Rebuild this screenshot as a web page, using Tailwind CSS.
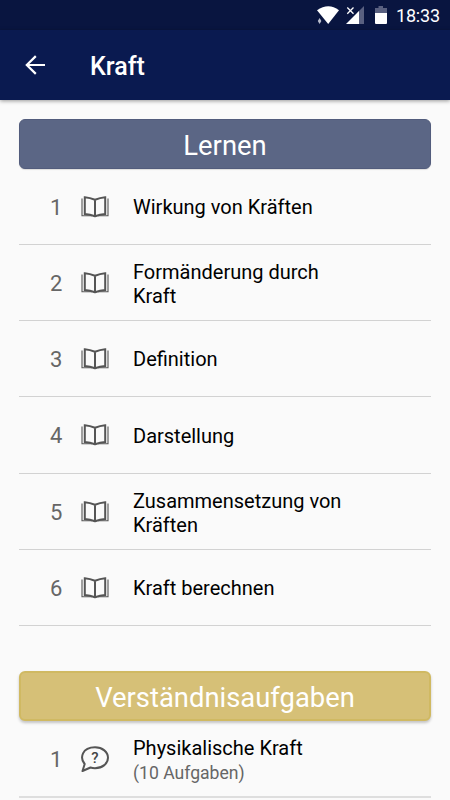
<!DOCTYPE html>
<html lang="de">
<head>
<meta charset="utf-8">
<title>Kraft</title>
<script src="https://cdn.jsdelivr.net/npm/@tailwindcss/browser@4"></script>
</head>
<body class="bg-[#fafafa] font-['Roboto',sans-serif] w-[450px] h-[800px] overflow-hidden text-black">
<svg class="hidden">
  <symbol id="book" viewBox="0 0 28 22">
    <path fill="none" stroke="#555" stroke-width="2" d="M14 3.800 Q9 1.800 3.800 1.300 V18 Q9 18.200 14 20.200 Q19 18.200 24.200 18 V1.300 Q19 1.800 14 3.800 Z M14 3.800 V20.200"/>
    <path fill="none" stroke="#555" stroke-width="1.100" d="M1 2.500 V19.800 H11 M27 2.500 V19.800 H17"/>
  </symbol>
</svg>
<div class="flex h-full flex-col">
  <div class="flex h-[30px] shrink-0 items-center justify-end bg-[#091540] pr-[10px] text-white">
    <svg class="h-[30px] w-[76px]" viewBox="0 0 76 30">
      <path fill="#fff" d="M4 10.200 Q15.500 2.300 26 10.200 L15.200 24 Z"/>
      <path fill="#b9bdcc" d="M6.600 18 L8.400 21 L6.600 24 L4.800 21 Z"/>
      <path fill="#596080" d="M51 6 V24 H44 V13 Z"/>
      <path fill="#fff" d="M46 11 V24 H33 Z"/>
      <path stroke="#fff" stroke-width="1.300" d="M34.300 7.500 L40.500 13.700 M40.500 7.500 L34.300 13.700"/>
      <path fill="#596080" d="M62 8 H65.500 V6 H70 V8 H74 V14 H62 Z"/>
      <path fill="#fff" d="M62 13 H74 V23 Q74 24 73 24 H63 Q62 24 62 23 Z"/>
    </svg>
    <span class="ml-[7px] w-[44px] whitespace-nowrap pt-px text-[18px] leading-none tracking-[-0.2px]">18:33</span>
  </div>
  <div class="z-10 flex h-[70px] shrink-0 items-center bg-[#0a1a50] text-white shadow-[0_1px_4px_rgba(0,0,0,0.4)]">
    <svg class="ml-[25px] h-5 w-5" viewBox="0 0 20 20" fill="none" stroke="#fff" stroke-width="2.200"><path d="M20 10 H2 M10.800 1.100 L1.800 10 L10.800 18.900"/></svg>
    <h1 class="ml-[45px] pt-[3px] text-[25px] font-medium leading-none">Kraft</h1>
  </div>
  <main class="flex flex-col px-[19px] pt-[19px]">
    <h2 class="flex h-[50px] shrink-0 items-center justify-center rounded-[6px] border border-[#525c7c] bg-[#5b6685] pt-[5px] text-[27.400px] text-white shadow-[0_1px_1px_rgba(0,0,0,0.12)]">Lernen</h2>
    <ol class="leading-6 text-[20px]">
      <li class="flex h-[76px] items-center border-b border-[#d2d2d2]"><span class="w-[62px] pl-[31px] pt-[2px] text-[22px] text-[#666]">1</span><svg class="mr-[24px] h-[22px] w-[28px]"><use href="#book"/></svg><span class="w-[220px] pt-px">Wirkung von Kräften</span></li>
      <li class="flex h-[76px] items-center border-b border-[#d2d2d2]"><span class="w-[62px] pl-[31px] pt-[2px] text-[22px] text-[#666]">2</span><svg class="mr-[24px] h-[22px] w-[28px]"><use href="#book"/></svg><span class="w-[220px] pt-[2px]">Formänderung durch<br>Kraft</span></li>
      <li class="flex h-[76px] items-center border-b border-[#d2d2d2]"><span class="w-[62px] pl-[31px] pt-[2px] text-[22px] text-[#666]">3</span><svg class="mr-[24px] h-[22px] w-[28px]"><use href="#book"/></svg><span class="w-[220px] pt-px">Definition</span></li>
      <li class="flex h-[77px] items-center border-b border-[#d2d2d2]"><span class="w-[62px] pl-[31px] pt-[2px] text-[22px] text-[#666]">4</span><svg class="mr-[24px] h-[22px] w-[28px]"><use href="#book"/></svg><span class="w-[220px] pt-[2px]">Darstellung</span></li>
      <li class="flex h-[76px] items-center border-b border-[#d2d2d2]"><span class="w-[62px] pl-[31px] pt-[2px] text-[22px] text-[#666]">5</span><svg class="mr-[24px] h-[22px] w-[28px]"><use href="#book"/></svg><span class="w-[220px] pt-[2px]">Zusammensetzung von<br>Kräften</span></li>
      <li class="flex h-[76px] items-center border-b border-[#d2d2d2]"><span class="w-[62px] pl-[31px] pt-[2px] text-[22px] text-[#666]">6</span><svg class="mr-[24px] h-[22px] w-[28px]"><use href="#book"/></svg><span class="w-[220px] pt-px">Kraft berechnen</span></li>
    </ol>
    <h2 class="mt-[45px] flex h-[50px] shrink-0 items-center justify-center rounded-[6px] border-2 border-[#d0b962] bg-[#d6c077] pt-[6px] text-[27.400px] text-white shadow-[0_2px_3px_rgba(0,0,0,0.22)]">Verständnisaufgaben</h2>
    <ol>
      <li class="flex h-[77px] items-center border-b-2 border-[#dedede]"><span class="w-[62px] pl-[31px] pt-[2px] text-[22px] text-[#666]">1</span>
        <svg class="mr-[24px] h-[26px] w-[28px]" viewBox="0 0 28 26"><path fill="none" stroke="#555" stroke-width="2" stroke-linejoin="round" d="M3.700 18 C-1.500 12 1 1.300 14 1.300 C21.500 1.300 27 6 27 11.700 C27 17.500 21.500 22.200 14 22.200 Q11.500 22.200 9.500 21.500 L1.500 25 Z"/><text x="14" y="17" text-anchor="middle" font-size="15" font-weight="500" fill="#444">?</text></svg>
        <div class="pt-[4px]"><p class="text-[20px] leading-6">Physikalische Kraft</p><p class="text-[17.600px] leading-[26px] text-[#666]">(10 Aufgaben)</p></div></li>
    </ol>
  </main>
</div>
</body>
</html>
